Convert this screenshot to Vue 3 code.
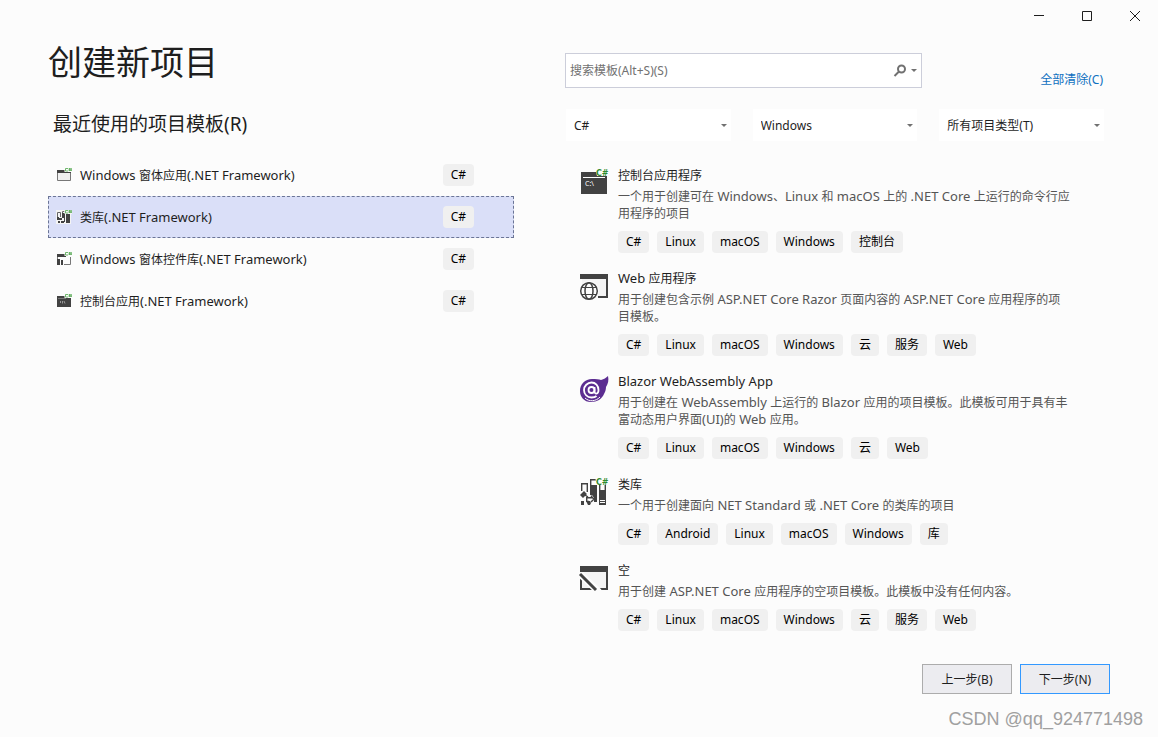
<script setup>
import { ref } from 'vue'

const selected = ref(1)
const recent = [
  { icon: 'form', name: 'Windows 窗体应用(.NET Framework)' },
  { icon: 'library', name: '类库(.NET Framework)' },
  { icon: 'control', name: 'Windows 窗体控件库(.NET Framework)' },
  { icon: 'console', name: '控制台应用(.NET Framework)' },
]
const filters = [
  { label: '语言', value: 'C#' },
  { label: '平台', value: 'Windows' },
  { label: '项目类型', value: '所有项目类型(T)' },
]
const templates = [
  {
    icon: 'console',
    name: '控制台应用程序',
    text: '一个用于创建可在 Windows、Linux 和 macOS 上的 .NET Core 上运行的命令行应用程序的项目',
    tags: ['C#', 'Linux', 'macOS', 'Windows', '控制台'],
  },
  {
    icon: 'web',
    name: 'Web 应用程序',
    text: '用于创建包含示例 ASP.NET Core Razor 页面内容的 ASP.NET Core 应用程序的项目模板。',
    tags: ['C#', 'Linux', 'macOS', 'Windows', '云', '服务', 'Web'],
  },
  {
    icon: 'blazor',
    name: 'Blazor WebAssembly App',
    text: '用于创建在 WebAssembly 上运行的 Blazor 应用的项目模板。此模板可用于具有丰富动态用户界面(UI)的 Web 应用。',
    tags: ['C#', 'Linux', 'macOS', 'Windows', '云', 'Web'],
  },
  {
    icon: 'library',
    name: '类库',
    text: '一个用于创建面向 NET Standard 或 .NET Core 的类库的项目',
    tags: ['C#', 'Android', 'Linux', 'macOS', 'Windows', '库'],
  },
  {
    icon: 'empty',
    name: '空',
    text: '用于创建 ASP.NET Core 应用程序的空项目模板。此模板中没有任何内容。',
    tags: ['C#', 'Linux', 'macOS', 'Windows', '云', '服务', 'Web'],
  },
]

// Splits a string into Latin and Chinese runs so that each script gets its own size.
const runs = (s) =>
  s.match(/[\x20-\x7e]+|[^\x20-\x7e]+/g).map((text) => ({ text, latin: /^[\x20-\x7e]/.test(text) }))
</script>

<template>
  <div class="window">
    <header class="titlebar">
      <button aria-label="最小化"><svg viewBox="0 0 12 12"><path d="M1 5.500h10" /></svg></button>
      <button aria-label="最大化"><svg viewBox="0 0 12 12"><path d="M1.500 1.500h9v9h-9z" /></svg></button>
      <button aria-label="关闭"><svg viewBox="0 0 12 12"><path d="M1 1l10 10M11 1L1 11" /></svg></button>
    </header>

    <main class="content">
      <section class="left">
        <h1>创建新项目</h1>
        <h2>最近使用的项目模板(R)</h2>
        <ul class="recent">
          <li v-for="(r, i) in recent" :key="r.name">
            <button class="recent-row" :class="{ active: selected === i }" @click="selected = i">
              <svg class="small-icon" viewBox="0 0 16 16" aria-hidden="true">
                <template v-if="r.icon === 'form'">
                  <path d="M1.500 4.500h13v9h-13z" fill="#f0f0f0" stroke="#777" />
                  <path d="M1 3h14v3H1z" fill="#424242" />
                </template>
                <template v-else-if="r.icon === 'library'">
                  <path d="M0 1h15v14H0z" fill="#f4f4f4" />
                  <path d="M1.500 8V3.500h3V8M6.500 6V2.500h2" fill="none" stroke="#666" />
                  <path d="M6 4h3v9H8V9H6zM10 5h4v9h-4zM1 8h2v3H1zM3 9h3v2H3zM2 12h2v2H2zM5 12h3v2H5z" fill="#424242" />
                </template>
                <template v-else-if="r.icon === 'control'">
                  <path d="M1 3h9v3H1z" fill="#424242" />
                  <path d="M14.500 6v7.500H8M1.500 6v2" fill="none" stroke="#777" />
                  <path d="M1 8h3v6H1zM5 9h2v5H5z" fill="#424242" />
                </template>
                <template v-else>
                  <path d="M1 3h14v11H1z" fill="#424242" />
                  <path d="M2 5.500h8" stroke="#777" />
                  <path d="M4 8l1 1-1 1M6.500 8v2.500M8 8l1 2.500" stroke="#bbb" stroke-width=".7" fill="none" />
                </template>
                <path d="M8.500 1H16v4H8.500z" :fill="selected === i ? '#f4f4f4' : '#fcfcfc'" />
                <path d="M12 1.500h-2.500v2.500H12M13.500 1v3M15 1v3M12.500 2H16M12.500 3.300H16" fill="none" stroke="#5fae5b" stroke-width=".9" />
              </svg>
              <span class="recent-name"><span v-for="(p, k) in runs(r.name)" :key="k" :class="{ latin: p.latin }">{{ p.text }}</span></span>
              <span class="tag">C#</span>
            </button>
          </li>
        </ul>
      </section>

      <section class="right">
        <div class="search-row">
          <div class="search">
            <input type="text" aria-label="搜索模板" placeholder="搜索模板(Alt+S)(S)" />
            <button aria-label="搜索">
              <svg class="glass" viewBox="0 0 14 14"><circle cx="8.500" cy="5" r="3.500" /><path d="M6 7.500L1.500 12" /></svg>
              <svg class="arrow" viewBox="0 0 6 3"><path d="M0 0h6L3 3z" /></svg>
            </button>
          </div>
          <a href="#">全部清除(C)</a>
        </div>
        <div class="filters">
          <label v-for="f in filters" :key="f.label" class="filter">
            <select :aria-label="f.label"><option>{{ f.value }}</option></select>
            <svg class="arrow" viewBox="0 0 6 3"><path d="M0 0h6L3 3z" /></svg>
          </label>
        </div>
        <ul class="templates">
          <li v-for="t in templates" :key="t.name">
            <svg v-if="t.icon === 'console'" class="big-icon" viewBox="0 0 28 28" aria-hidden="true">
              <path d="M1 2h26v22H1z" fill="#424242" />
              <path d="M3 7.500h22" stroke="#fff" />
              <path d="M15 -2h13v8H17z" fill="#fcfcfc" />
              <text x="5" y="16" font-size="7" fill="#fff">C:\</text>
              <text class="badge" x="16" y="6">C#</text>
            </svg>
            <svg v-else-if="t.icon === 'web'" class="big-icon" viewBox="0 0 28 28" aria-hidden="true">
              <path d="M0 1h28v24H18v-2h8V6H0z" fill="#424242" />
              <path d="M2 6h24v17H2z" fill="#f4f4f4" />
              <circle cx="9" cy="18" r="10" fill="#fcfcfc" />
              <g fill="none" stroke="#424242" stroke-width="1.500">
                <circle cx="9" cy="18" r="8.300" />
                <ellipse cx="9" cy="18" rx="4" ry="8.300" />
                <path d="M2 14.500h14M2 21.500h14" stroke-width="1.200" />
              </g>
            </svg>
            <svg v-else-if="t.icon === 'blazor'" class="big-icon" viewBox="0 0 28 28" aria-hidden="true">
              <path d="M28 0c1 4 0 8-2 11 0 3-1 5-2 7-2 5-7 8-13 8C4 26 0 21 0 15 0 8 5 3 12 3c4 0 7 0 9 1 3-1 5-2 7-4z" fill="#5c2d91" />
              <g fill="none" stroke="#fff" stroke-width="1.800">
                <circle cx="11.500" cy="14" r="3" />
                <path d="M14.500 11v4.500c0 3 4 3 4-1.500 0-4.500-3-7.500-7-7.500S4 10 4 14s3 7.500 7.500 7.500c2 0 4-.500 5-1.500" />
                <path d="M5 22c4 4 11 3.500 15-1" stroke-width="1" />
              </g>
            </svg>
            <svg v-else-if="t.icon === 'library'" class="big-icon" viewBox="0 0 28 28" aria-hidden="true">
              <path d="M1.700 12V4.700h5.600V13M10.700 8V.700h6V3" fill="none" stroke="#424242" stroke-width="1.400" />
              <path d="M10 6h7v17h-3v-4l-2-3h-2z" fill="#424242" />
              <path d="M19.700 4v8" stroke="#424242" stroke-width="1.400" />
              <path d="M25.300 6v6" stroke="#424242" stroke-width="1.400" />
              <path d="M19 11h7v15h-7z" fill="#424242" />
              <path d="M20 21.500h5M20 23.500h5" stroke="#fcfcfc" />
              <path d="M0 16l4-4 3 3-4 4zM1 22h3v4H1zM7 22h3l1 2-1 2H8l-1-2z" fill="#424242" />
              <path d="M5 16l3 2M7 18.700h5.500l-1.500-2M12.500 18.700L14 20l-3 3M6.700 18v4.500H9" fill="none" stroke="#424242" stroke-width="1.400" />
              <path d="M15 -2h13v8H17z" fill="#fcfcfc" />
              <text class="badge" x="16" y="6">C#</text>
            </svg>
            <svg v-else class="big-icon" viewBox="0 0 28 28" aria-hidden="true">
              <path d="M1 6h26v18H1z" fill="#f4f4f4" />
              <path d="M0 6h2v19H0zM26 6h2v19h-7v-2h5zM0 23h21v2H0z" fill="#424242" />
              <path d="M-2 7l21 20" stroke="#fcfcfc" stroke-width="7" />
              <path d="M0 9l16 16" stroke="#424242" stroke-width="3" />
              <path d="M0 1h28v6H0z" fill="#424242" />
            </svg>
            <div class="info">
              <h3><span v-for="(r, i) in runs(t.name)" :key="i" :class="{ latin: r.latin }">{{ r.text }}</span></h3>
              <p><span v-for="(r, i) in runs(t.text)" :key="i" :class="{ latin: r.latin }">{{ r.text }}</span></p>
              <div class="tags"><span v-for="g in t.tags" :key="g" class="tag">{{ g }}</span></div>
            </div>
          </li>
        </ul>
      </section>
    </main>

    <footer class="actions">
      <button>上一步(B)</button>
      <button class="primary">下一步(N)</button>
    </footer>
    <div class="watermark">CSDN @qq_924771498</div>
  </div>
</template>

<style>
body {
  background: #fcfcfc;
}
</style>

<style scoped>
.window {
  position: relative;
  box-sizing: border-box;
  min-height: 100vh;
  display: flex;
  flex-direction: column;
  background: #fcfcfc;
  color: #1e1e1e;
  font: 12px/17px "Noto Sans", "Noto Sans CJK SC", sans-serif;
}
button, input, select {
  font: inherit;
  color: inherit;
  border: 0;
  border-radius: 0;
  background: none;
  padding: 0;
  margin: 0;
}
h1, h2, h3, p, ul {
  margin: 0;
  padding: 0;
  font-weight: 400;
  list-style: none;
}
.titlebar {
  display: flex;
  justify-content: flex-end;
  height: 32px;
}
.titlebar button {
  width: 48px;
  padding-left: 2px;
  display: grid;
  place-items: center;
}
.titlebar svg {
  width: 12px;
  height: 12px;
  fill: none;
  stroke: #1e1e1e;
}
.content {
  flex: 1;
  display: grid;
  grid-template-columns: 466fr 545fr;
  gap: 51px;
  padding: 0 48px;
}
h1 {
  margin-top: 6px;
  font-size: 34px;
  line-height: 48px;
}
h2 {
  margin: 24px 0 16px 5px;
  font-size: 19px;
  line-height: 28px;
}
.recent-row {
  width: 100%;
  height: 42px;
  display: flex;
  align-items: center;
  padding: 0 39px 0 7px;
  border: 1px solid transparent;
  text-align: left;
}
.recent-row.active {
  background: #dadff8;
  border: 1px dashed #6b7596;
}
.small-icon {
  width: 16px;
  height: 16px;
}
.recent-name {
  flex: 1;
  margin-left: 8px;
}
.tag {
  padding: 0 8px;
  border-radius: 4px;
  background: #f0f0f0;
  line-height: 22px;
  color: #000;
  text-align: center;
}
.search-row {
  display: flex;
  justify-content: space-between;
  align-items: flex-end;
  margin-top: 21px;
  padding-right: 7px;
}
.search {
  flex: 0 1 357px;
  height: 35px;
  box-sizing: border-box;
  display: flex;
  align-items: center;
  border: 1px solid #ccceda;
  background: #fff;
}
.search input {
  flex: 1;
  min-width: 0;
  padding-left: 4px;
  outline: 0;
}
.search input::placeholder {
  color: #717171;
  opacity: 1;
}
.search button {
  display: flex;
  align-items: center;
  gap: 4px;
  padding-right: 4px;
}
.glass {
  width: 14px;
  height: 14px;
  fill: none;
  stroke: #717171;
  stroke-width: 2;
}
.arrow {
  width: 6px;
  height: 3px;
  fill: #717171;
}
a {
  color: #0e70c0;
  text-decoration: none;
}
.filters {
  display: grid;
  grid-template-columns: repeat(3, 1fr);
  gap: 22px;
  margin-top: 21px;
  padding: 0 6px 0 1px;
}
.filter {
  display: flex;
  align-items: center;
  background: #fff;
  padding-right: 4px;
}
.filter select {
  flex: 1;
  min-width: 0;
  height: 32px;
  padding-left: 8px;
  appearance: none;
}
.templates {
  margin-top: 26px;
  padding: 0 39px 0 15px;
}
.templates li {
  display: flex;
  gap: 10px;
  padding-bottom: 17px;
}
.big-icon {
  width: 28px;
  height: 28px;
  flex: none;
  margin-top: 3px;
  overflow: visible;
}
.badge {
  font: 700 8px "DejaVu Sans", sans-serif;
  fill: #2e8b2e;
}
.info {
  flex: 1;
}
h3 {
  font-size: 12px;
  line-height: 17px;
}
.latin {
  font-size: 13px;
  line-height: 16px;
}
p {
  margin: 4px 0 9px;
  color: #555;
}
.tags {
  display: flex;
  gap: 8px;
}
.actions {
  display: flex;
  justify-content: flex-end;
  gap: 8px;
  padding: 0 48px 43px;
}
.actions button {
  width: 90px;
  height: 30px;
  border: 1px solid #acacac;
  background: #ececf0;
}
.actions .primary {
  border-color: #3399ff;
}
.watermark {
  position: absolute;
  right: 15px;
  bottom: 8px;
  font: 18px/20px "Liberation Sans", sans-serif;
  color: #a0a0a0;
}
</style>
